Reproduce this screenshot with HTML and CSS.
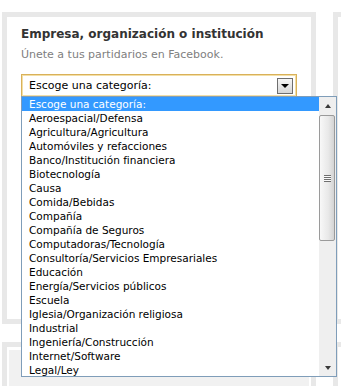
FILE: index.html
```html
<!DOCTYPE html>
<html lang="es">
<head>
  <meta charset="UTF-8">
  <title>Crear una página</title>
  <link rel="stylesheet" href="styles.css">
</head>
<body>
  <div class="grid">
    <div class="panel">
      <h2>Empresa, organización o institución</h2>
      <p class="sub">Únete a tus partidarios en Facebook.</p>

      <div class="combo">
        <div class="select">
          <span>Escoge una categoría:</span>
          <span class="arrow-btn"><span class="tri-down"></span></span>
        </div>

        <div class="dropdown">
          <ul class="options">
            <li class="selected">Escoge una categoría:</li>
            <li>Aeroespacial/Defensa</li>
            <li>Agricultura/Agricultura</li>
            <li>Automóviles y refacciones</li>
            <li>Banco/Institución financiera</li>
            <li>Biotecnología</li>
            <li>Causa</li>
            <li>Comida/Bebidas</li>
            <li>Compañía</li>
            <li>Compañía de Seguros</li>
            <li>Computadoras/Tecnología</li>
            <li>Consultoría/Servicios Empresariales</li>
            <li>Educación</li>
            <li>Energía/Servicios públicos</li>
            <li>Escuela</li>
            <li>Iglesia/Organización religiosa</li>
            <li>Industrial</li>
            <li>Ingeniería/Construcción</li>
            <li>Internet/Software</li>
            <li>Legal/Ley</li>
          </ul>
          <div class="scrollbar">
            <div class="sb-btn"><span class="sb-up"></span></div>
            <div class="sb-track">
              <div class="thumb"><span class="grip"></span></div>
            </div>
            <div class="sb-btn"><span class="sb-down"></span></div>
          </div>
        </div>
      </div>
    </div>
    <div class="panel side"></div>

    <div class="panel lower"><div class="fill"></div></div>
    <div class="panel lower side"></div>
  </div>
</body>
</html>
```
FILE: styles.css
```css
html, body {
  height: 100%;
}
body {
  margin: 0;
  background: #fff;
  font-family: "DejaVu Sans", Verdana, sans-serif;
  overflow: hidden;
}
.grid {
  display: grid;
  grid-template-columns: 314px 1fr;
  grid-template-rows: 312px 1fr;
  column-gap: 17px;
  row-gap: 18px;
  padding: 12px 0 0 2px;
  height: 100%;
  box-sizing: border-box;
}
.panel {
  border: 5px solid #e8e8e8;
  background: #fff;
  padding: 10px 14px 0;
  min-width: 0;
}
.panel.side {
  border-right: none;
  padding: 0;
}
.panel.lower {
  border-bottom: none;
  padding: 3px 2px 0;
}
.fill {
  background: #f1f1f1;
  height: 100%;
}
h2 {
  margin: 0;
  font-size: 12px;
  line-height: 15px;
  font-weight: bold;
  color: #333;
}
.sub {
  margin: 6px 0 0;
  font-size: 11px;
  line-height: 14px;
  color: #808080;
}
.combo {
  position: relative;
  margin-top: 12px;
  z-index: 2;
}
.select {
  height: 23px;
  border: 1px solid #d9b15a;
  box-shadow: inset 0 0 0 1px #f3dfa6;
  display: flex;
  align-items: center;
  justify-content: space-between;
  padding: 0 3px 0 7px;
  font-size: 11px;
  color: #000;
  box-sizing: border-box;
  width: 276px;
}
.arrow-btn {
  width: 14px;
  height: 14px;
  border: 1px solid #6e6e6e;
  background: linear-gradient(#f6f6f6, #d6d6d6);
  display: flex;
  align-items: center;
  justify-content: center;
}
.tri-down {
  border-left: 4px solid transparent;
  border-right: 4px solid transparent;
  border-top: 4px solid #000;
  margin-top: 1px;
}
.dropdown {
  position: absolute;
  left: 0;
  top: 22px;
  width: 316px;
  height: 281px;
  box-sizing: border-box;
  border: 1px solid #7f9db9;
  background: #fff;
  display: flex;
}
.options {
  list-style: none;
  margin: 0;
  padding: 0;
  flex: 1;
  overflow: hidden;
  font-size: 10.5px;
  line-height: 14px;
  color: #000;
}
.options li {
  padding-left: 7px;
  height: 14px;
  white-space: nowrap;
}
.options li.selected {
  background: #3399ff;
  color: #fff;
}
.scrollbar {
  width: 17px;
  background: #efefef;
  display: flex;
  flex-direction: column;
}
.sb-btn {
  height: 17px;
  display: flex;
  align-items: center;
  justify-content: center;
}
.sb-up {
  border-left: 3.5px solid transparent;
  border-right: 3.5px solid transparent;
  border-bottom: 4px solid #3a3a3a;
}
.sb-down {
  border-left: 3.5px solid transparent;
  border-right: 3.5px solid transparent;
  border-top: 4px solid #3a3a3a;
}
.sb-track {
  flex: 1;
  padding: 1px 0 0;
}
.thumb {
  height: 124px;
  margin: 0 1px 0 0;
  border: 1px solid #9a9a9a;
  border-radius: 2px;
  background: linear-gradient(to right, #f8f8f8, #e8e8e8 60%, #d4d4d4);
  display: flex;
  align-items: center;
  justify-content: center;
}
.grip {
  width: 7px;
  height: 7px;
  background: repeating-linear-gradient(#6f6f6f 0 1px, #fafafa 1px 2px);
}
```
